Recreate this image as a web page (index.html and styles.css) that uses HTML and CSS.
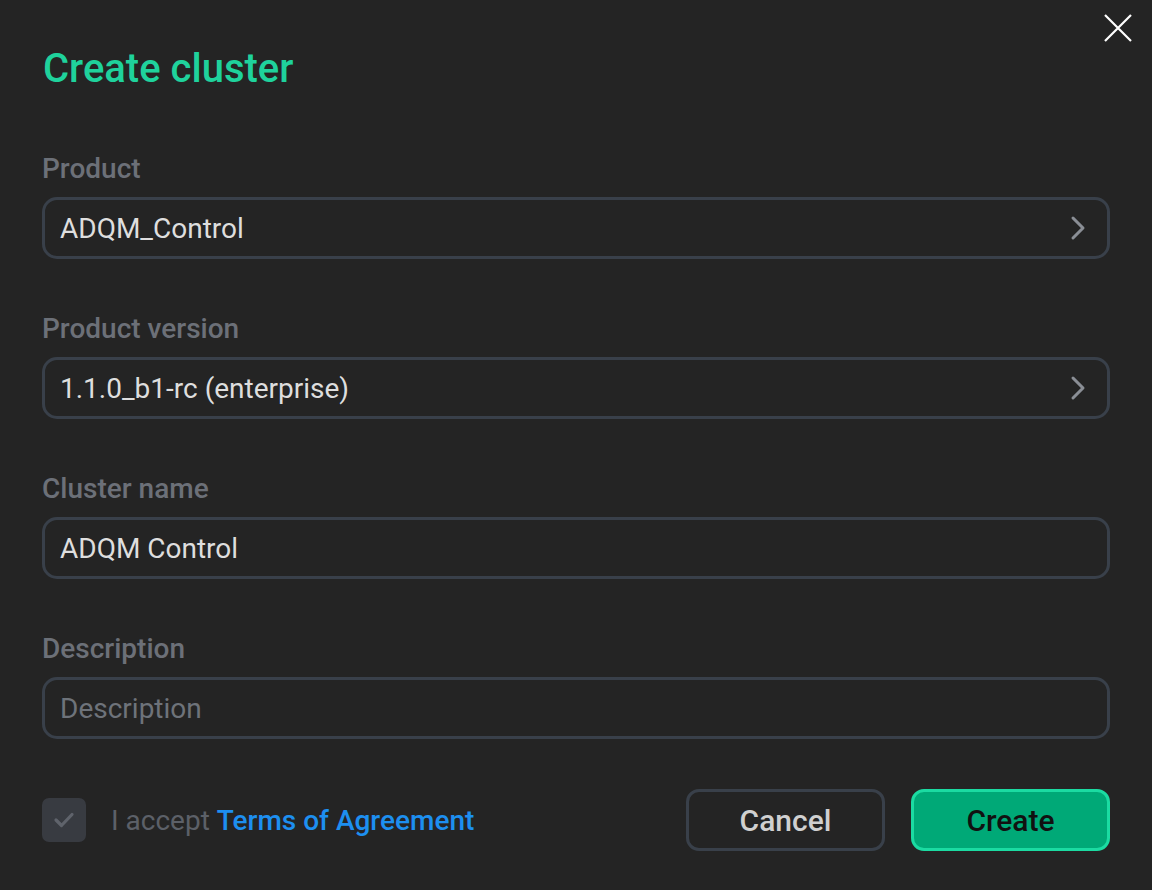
FILE: index.html
```html
<!DOCTYPE html>
<html>
<head>
<meta charset="utf-8">
<link rel="stylesheet" href="styles.css">
</head>
<body>
<div class="dialog">
  <button class="close" aria-label="Close">
    <svg width="28" height="28" viewBox="0 0 28 28"><path d="M1 1L27 27M27 1L1 27" stroke="#ffffff" stroke-width="2.2" fill="none"/></svg>
  </button>
  <h1 class="title">Create cluster</h1>
  <div class="fields">
    <div class="field">
      <div class="label">Product</div>
      <div class="input select"><span class="value">ADQM_Control</span>
        <svg class="chev" width="16" height="26" viewBox="0 0 16 26"><path d="M3 3L13 13L3 23" stroke="#8a8e95" stroke-width="3" fill="none" stroke-linecap="round" stroke-linejoin="round"/></svg>
      </div>
    </div>
    <div class="field">
      <div class="label">Product version</div>
      <div class="input select"><span class="value">1.1.0_b1-rc (enterprise)</span>
        <svg class="chev" width="16" height="26" viewBox="0 0 16 26"><path d="M3 3L13 13L3 23" stroke="#8a8e95" stroke-width="3" fill="none" stroke-linecap="round" stroke-linejoin="round"/></svg>
      </div>
    </div>
    <div class="field">
      <div class="label">Cluster name</div>
      <div class="input"><span class="value">ADQM Control</span></div>
    </div>
    <div class="field">
      <div class="label">Description</div>
      <div class="input"><span class="placeholder">Description</span></div>
    </div>
  </div>
  <div class="footer">
    <div class="agree">
      <span class="checkbox">
        <svg width="22" height="18" viewBox="0 0 22 18"><path d="M3 9L8.5 14.5L19 3.5" stroke="#5f636b" stroke-width="3.2" fill="none" stroke-linecap="round" stroke-linejoin="round"/></svg>
      </span>
      <span class="agree-text">I accept <a class="link">Terms of Agreement</a></span>
    </div>
    <div class="buttons">
      <button class="btn cancel">Cancel</button>
      <button class="btn create">Create</button>
    </div>
  </div>
</div>
</body>
</html>
```
FILE: styles.css
```css
* { box-sizing: border-box; }
html, body { margin: 0; padding: 0; background: #242424; }
body { font-family: Roboto, "Noto Sans", sans-serif; width: 1152px; height: 890px; overflow: hidden; }
.dialog { position: relative; padding: 44px 42px 0 42px; }
.close { position: absolute; top: 14px; right: 20px; width: 28px; height: 28px; padding: 0; border: 0; background: none; }
.close svg { display: block; }
.title { margin: 0 0 0 1px; font-size: 40px; font-weight: 500; line-height: 50px; color: #1fd29c; }
.fields { margin-top: 60px; display: flex; flex-direction: column; gap: 55px; }
.field { display: flex; flex-direction: column; gap: 14px; }
.label { font-size: 28px; font-weight: 500; line-height: 29px; color: #6c7078; }
.input { height: 62px; flex: none; border: 3px solid #39404a; border-radius: 15px; display: flex; align-items: center; padding: 0 21px 0 15px; width: 1068px; }
.value { font-size: 28px; color: #dedede; flex: 1; }
.placeholder { font-size: 28px; color: #6e737a; flex: 1; }
.chev { display: block; }
.footer { margin-top: 50px; display: flex; align-items: center; justify-content: space-between; width: 1068px; }
.agree { display: flex; align-items: center; gap: 25px; }
.checkbox { width: 44px; height: 44px; border-radius: 7px; background: #383b41; display: flex; align-items: center; justify-content: center; }
.agree-text { font-size: 28px; color: #5c6068; }
.link { color: #1d8ff0; font-weight: 500; }
.buttons { display: flex; gap: 26px; }
.btn { width: 199px; height: 62px; border-radius: 13px; font-family: Roboto, sans-serif; font-size: 30px; font-weight: 500; padding: 0; }
.cancel { background: #242424; border: 3px solid #39404a; color: #d0d0d0; }
.create { background: #00a977; border: 3px solid #1bdba2; color: #111; }
```
